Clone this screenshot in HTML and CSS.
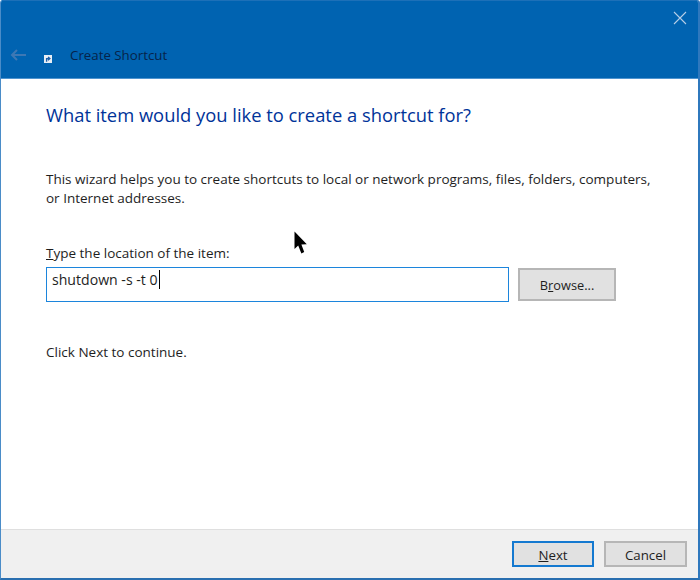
FILE: index.html
```html
<!DOCTYPE html>
<html lang="en">
<head>
<meta charset="utf-8">
<title>Create Shortcut</title>
<link rel="stylesheet" href="styles.css">
</head>
<body>
<div class="window">
  <header class="titlebar">
    <div class="close-row">
      <svg class="close-icon" width="14" height="14" viewBox="0 0 14 14"><path d="M1 1 L13 13 M13 1 L1 13" stroke="#b5cde6" stroke-width="1.1" fill="none"/></svg>
    </div>
    <div class="nav-row">
      <svg class="back-icon" width="16" height="12" viewBox="0 0 16 12"><path d="M16 6 H2 M7 1 L2 6 L7 11" stroke="#3e78b4" stroke-width="2" fill="none"/></svg>
      <svg class="app-icon" width="8" height="8" viewBox="0 0 8 8"><rect width="8" height="8" fill="#e8eef5"/><path d="M2.6 6.8 V3.6 H5.4 M4 2 L5.9 3.6 L4 5.2" stroke="#1d5fa8" stroke-width="1.3" fill="none"/></svg>
      <span class="title">Create Shortcut</span>
    </div>
  </header>
  <main class="content">
    <h1 class="heading">What item would you like to create a shortcut for?</h1>
    <p class="intro">This wizard helps you to create shortcuts to local or network programs, files, folders, computers,<br>or Internet addresses.</p>
    <label class="field-label"><u>T</u>ype the location of the item:</label>
    <div class="field-row">
      <div class="textbox"><span>shutdown -s -t 0</span><i class="caret"></i></div>
      <button class="btn browse">B<u>r</u>owse...</button>
    </div>
    <p class="hint">Click Next to continue.</p>
  </main>
  <footer class="footer">
    <button class="btn next"><u>N</u>ext</button>
    <button class="btn cancel">Cancel</button>
  </footer>
  <svg class="cursor" width="14" height="24" viewBox="0 0 14 24"><path d="M0.5 0.5 V18 L4.2 14.4 L7.4 22.5 L10.2 21 L7.4 13.6 L12.8 13.2 Z" fill="#000"/></svg>
</div>
</body>
</html>
```
FILE: styles.css
```css
* { box-sizing: border-box; }
html, body { margin: 0; padding: 0; }
body { font-family: "Open Sans", "Liberation Sans", sans-serif; color: #1e1e1e; }
.window {
  position: relative;
  width: 700px;
  height: 580px;
  display: flex;
  flex-direction: column;
  background: #fff;
  border-left: 1px solid #4a8cc8;
  border-right: 2px solid #2f78bd;
  border-bottom: 2px solid #2a6fb0;
  border-top-left-radius: 3px;
  border-top-right-radius: 3px;
  overflow: hidden;
}
.titlebar {
  height: 79px;
  background: #0063b1;
  border-top: 1px solid #1d70b8;
  border-bottom: 1px solid #4f94cf;
  flex: none;
}
.close-row { display: flex; justify-content: flex-end; padding: 10px 11px 0 0; height: 43px; }
.nav-row { display: flex; align-items: center; height: 22px; }
.back-icon { margin-left: 9px; }
.app-icon { margin-left: 18px; margin-top: 8px; }
.title { margin-left: 18px; font-size: 13.3px; color: #06234a; }
.content { flex: 1; padding: 24px 0 0 45px; }
.heading { margin: 0; font-size: 18.35px; font-weight: 400; color: #003399; line-height: 24px; }
.intro { margin: 43px 0 0; font-size: 13.5px; line-height: 19px; white-space: nowrap; }
.field-label { display: block; margin-top: 35px; font-size: 13.5px; line-height: 20px; }
.field-row { display: flex; margin-top: 4px; gap: 9px; align-items: flex-start; }
.textbox {
  width: 463px;
  height: 35px;
  border: 1px solid #1c85dc;
  padding: 2px 0 0 5px;
  font-size: 14.1px;
  line-height: 20px;
  display: flex;
  align-items: flex-start;
}
.caret { display: inline-block; width: 1px; height: 19px; background: #000; margin-left: 1px; }
.btn {
  font-family: inherit;
  font-size: 13.3px;
  color: #1e1e1e;
  background: #e1e1e1;
  border: 2px solid #b6b6b6;
  padding: 1px 0 0;
}
.browse { width: 98px; height: 33px; margin-top: 1px; font-size: 12.8px; }
.hint { margin: 40px 0 0; font-size: 13.5px; line-height: 20px; }
.footer {
  flex: none;
  height: 49px;
  background: #f0f0f0;
  border-top: 1px solid #dfdfdf;
  display: flex;
  justify-content: flex-end;
  align-items: flex-start;
  gap: 10px;
  padding: 11px 11px 0 0;
}
.next, .cancel { height: 26px; line-height: 20px; }
.next { width: 82px; border-color: #1479d0; }
.cancel { width: 83px; }
.cursor { position: absolute; left: 293px; top: 231px; }
```
